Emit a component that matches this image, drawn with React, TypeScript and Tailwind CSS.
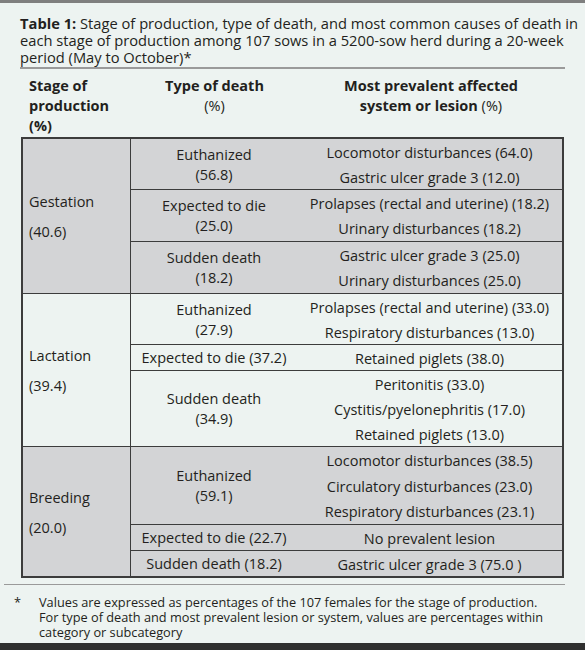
import React from "react"

type Row = {
  type: string[]
  causes: string[]
  h: number
}

type Group = {
  stage: string
  pct: string
  gray: boolean
  rows: Row[]
}

// row heights (px) taken from the printed table
const groups: Group[] = [
  {
    stage: "Gestation",
    pct: "(40.6)",
    gray: true,
    rows: [
      { h: 50, type: ["Euthanized", "(56.8)"], causes: ["Locomotor disturbances (64.0)", "Gastric ulcer grade 3 (12.0)"] },
      { h: 51, type: ["Expected to die", "(25.0)"], causes: ["Prolapses (rectal and uterine) (18.2)", "Urinary disturbances (18.2)"] },
      { h: 51, type: ["Sudden death", "(18.2)"], causes: ["Gastric ulcer grade 3 (25.0)", "Urinary disturbances (25.0)"] },
    ],
  },
  {
    stage: "Lactation",
    pct: "(39.4)",
    gray: false,
    rows: [
      { h: 50, type: ["Euthanized", "(27.9)"], causes: ["Prolapses (rectal and uterine) (33.0)", "Respiratory disturbances (13.0)"] },
      { h: 25, type: ["Expected to die (37.2)"], causes: ["Retained piglets (38.0)"] },
      { h: 75, type: ["Sudden death", "(34.9)"], causes: ["Peritonitis (33.0)", "Cystitis/pyelonephritis (17.0)", "Retained piglets (13.0)"] },
    ],
  },
  {
    stage: "Breeding",
    pct: "(20.0)",
    gray: true,
    rows: [
      { h: 77, type: ["Euthanized", "(59.1)"], causes: ["Locomotor disturbances (38.5)", "Circulatory disturbances (23.0)", "Respiratory disturbances (23.1)"] },
      { h: 25, type: ["Expected to die (22.7)"], causes: ["No prevalent lesion"] },
      { h: 25, type: ["Sudden death (18.2)"], causes: ["Gastric ulcer grade 3 (75.0 )"] },
    ],
  },
]

function GroupBlock({ group, first }: { group: Group; first: boolean }) {
  return (
    <div className={`flex ${first ? "" : "border-t border-[#3c3c3c]"} ${group.gray ? "bg-[#d3d4d6]" : ""}`}>
      {/* Stage */}
      <div className="w-[108px] shrink-0 border-r border-[#3c3c3c] pl-[6px] pt-[3px] flex flex-col justify-center leading-[30px]">
        <span>{group.stage}</span>
        <span>{group.pct}</span>
      </div>

      {/* Type + causes */}
      <div className="flex-1 flex flex-col">
        {group.rows.map((row, i) => (
          <div
            key={i}
            className={`flex box-content ${i > 0 ? "border-t border-[#3c3c3c]" : ""}`}
            style={{ height: row.h }}
          >
            <div className="w-[166px] shrink-0 flex flex-col justify-center items-center leading-[20px] pt-[2px]">
              {row.type.map((t) => (
                <span key={t} className="whitespace-nowrap">{t}</span>
              ))}
            </div>
            <div className="flex-1 flex flex-col">
              {row.causes.map((c) => (
                <div key={c} className="flex-1 flex items-center justify-center pt-[3px] whitespace-nowrap">
                  {c}
                </div>
              ))}
            </div>
          </div>
        ))}
      </div>
    </div>
  )
}

export default function App() {
  return (
    <div className="w-[585px] h-[650px] overflow-hidden bg-[#edf3f1] border-t-[3px] border-[#7f7f7f] text-[#231f20] font-['Open_Sans',sans-serif] flex flex-col">
      <div className="flex-1 px-[20px] pt-[12px]">
        {/* Title */}
        <p className="text-[14.7px] leading-[17px] whitespace-nowrap">
          <span className="font-bold">Table 1:</span> Stage of production, type of death, and most common causes of death in
          <br />
          each stage of production among 107 sows in a 5200-sow herd during a 20-week
          <br />
          period (May to October)*
        </p>
        <div className="mt-[1px] h-[1.5px] bg-[#9a9a9a]" />

        {/* Header */}
        <div className="mt-[7px] ml-[1px] w-[543px] flex text-[14.5px] leading-[20px]">
          <div className="w-[110px] shrink-0 pl-[8px] font-bold">
            Stage of
            <br />
            production
            <br />
            (%)
          </div>
          <div className="w-[167px] shrink-0 text-center">
            <div className="font-bold">Type of death</div>
            <div>(%)</div>
          </div>
          <div className="flex-1 text-center">
            <div className="font-bold">Most prevalent affected</div>
            <div>
              <span className="font-bold">system or lesion</span> (%)
            </div>
          </div>
        </div>

        {/* Table */}
        <div className="mt-[1px] ml-[1px] w-[543px] border-2 border-[#3c3c3c] text-[14.5px]">
          {groups.map((g, i) => (
            <GroupBlock key={g.stage} group={g} first={i === 0} />
          ))}
        </div>

        {/* Footnote */}
        <div className="mt-[6px] -ml-[16px] h-[1.5px] bg-[#9a9a9a]" />
        <div className="mt-[10px] -ml-[6px] flex text-[12.75px] leading-[15px]">
          <span className="w-[25px] shrink-0">*</span>
          <p className="whitespace-nowrap">
            Values are expressed as percentages of the 107 females for the stage of production.
            <br />
            For type of death and most prevalent lesion or system, values are percentages within
            <br />
            category or subcategory
          </p>
        </div>
      </div>
      <div className="h-[7px] bg-[#2f2f2f]" />
    </div>
  )
}
